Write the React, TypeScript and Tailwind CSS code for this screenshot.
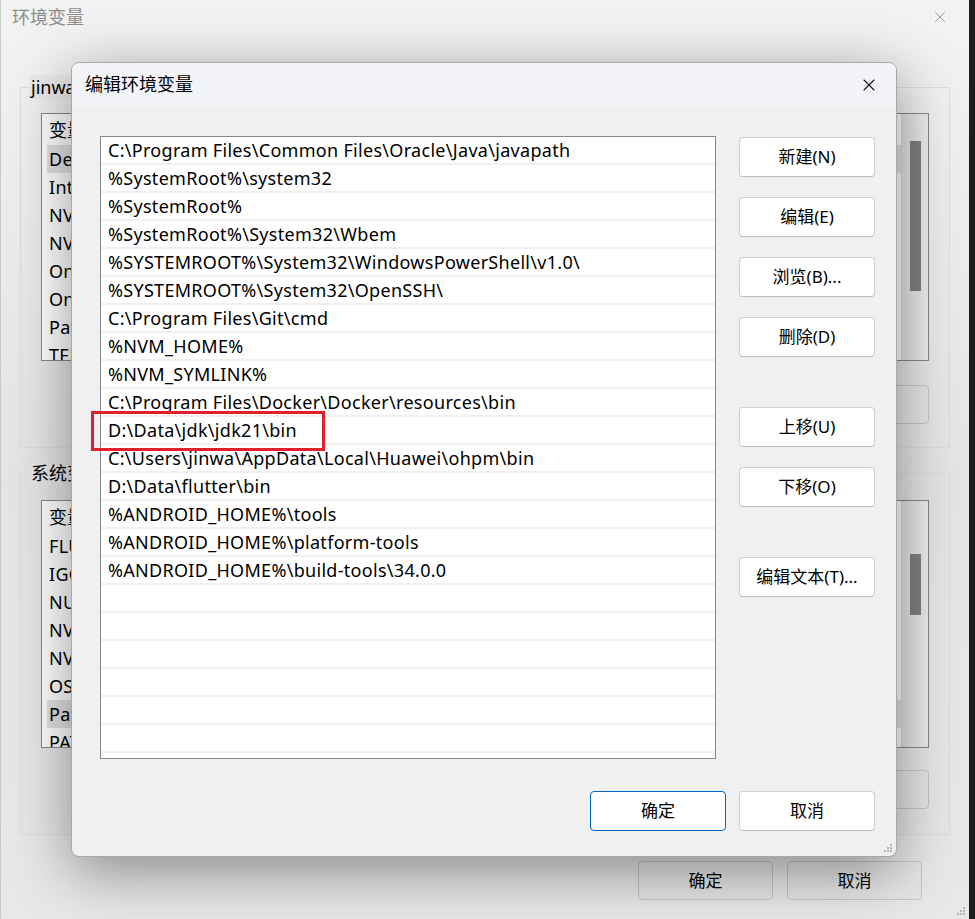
import { X } from 'lucide-react';

const FONT = '"Noto Sans", "Noto Sans CJK SC", sans-serif';

const paths = [
  'C:\\Program Files\\Common Files\\Oracle\\Java\\javapath',
  '%SystemRoot%\\system32',
  '%SystemRoot%',
  '%SystemRoot%\\System32\\Wbem',
  '%SYSTEMROOT%\\System32\\WindowsPowerShell\\v1.0\\',
  '%SYSTEMROOT%\\System32\\OpenSSH\\',
  'C:\\Program Files\\Git\\cmd',
  '%NVM_HOME%',
  '%NVM_SYMLINK%',
  'C:\\Program Files\\Docker\\Docker\\resources\\bin',
  'D:\\Data\\jdk\\jdk21\\bin',
  'C:\\Users\\jinwa\\AppData\\Local\\Huawei\\ohpm\\bin',
  'D:\\Data\\flutter\\bin',
  '%ANDROID_HOME%\\tools',
  '%ANDROID_HOME%\\platform-tools',
  '%ANDROID_HOME%\\build-tools\\34.0.0',
];

const userVars = ['Desktop', 'IntelliJ IDEA', 'NVM_HOME', 'NVM_SYMLINK', 'OneDrive', 'OneDriveConsumer', 'Path', 'TEMP'];
const sysVars = ['FLUTTER_STORAGE_BASE_URL', 'IGCCSVC_DB', 'NUMBER_OF_PROCESSORS', 'NVM_HOME', 'NVM_SYMLINK', 'OS', 'Path', 'PATHEXT'];

function Grip() {
  return (
    <svg width="10" height="10" viewBox="0 0 10 10" className="absolute right-[3px] bottom-[3px]">
      <rect x="7" y="1" width="2" height="2" fill="#b4b4b4" />
      <rect x="4" y="4" width="2" height="2" fill="#b4b4b4" />
      <rect x="7" y="4" width="2" height="2" fill="#b4b4b4" />
      <rect x="1" y="7" width="2" height="2" fill="#b4b4b4" />
      <rect x="4" y="7" width="2" height="2" fill="#b4b4b4" />
      <rect x="7" y="7" width="2" height="2" fill="#b4b4b4" />
    </svg>
  );
}

function VarList({ items, selected, thumbTop, thumbH }: { items: string[]; selected: number; thumbTop: number; thumbH: number }) {
  return (
    <div className="flex h-[248px] border border-[#828790] bg-white overflow-hidden">
      <div className="flex-1 flex flex-col overflow-hidden">
        <div className="h-[31px] shrink-0 flex items-center pl-[7px] pt-[2px] text-[18px] text-black">
          <span className="w-[300px]">变量</span>
          <span>值</span>
        </div>
        {items.map((v, i) => (
          <div
            key={v}
            className={`h-[28px] shrink-0 flex items-center pl-[2px] ml-[5px] text-[18px] tracking-[0.3px] text-black whitespace-nowrap ${i === selected ? 'bg-[#e3e3e3]' : ''}`}
          >
            {v}
          </div>
        ))}
      </div>
      <div className="w-[27px] shrink-0 bg-gradient-to-r from-[#e2e2e2] to-[#ececec] border-l border-[#d8d8d8] relative">
        <div className="absolute left-[8px] w-[11px] bg-[#808080]" style={{ top: thumbTop, height: thumbH }} />
      </div>
    </div>
  );
}

function BgButton({ label, w = 136 }: { label: string; w?: number }) {
  return (
    <div
      className="h-[39px] shrink-0 border border-[#c4c4c4] rounded-[4px] bg-[#e6e6e6] flex items-center justify-center text-[17px] text-black"
      style={{ width: w }}
    >
      {label}
    </div>
  );
}

function DlgButton({ label, primary }: { label: string; primary?: boolean }) {
  return (
    <div
      className={`w-[136px] h-[40px] shrink-0 rounded-[4px] bg-white flex items-center justify-center text-[17px] text-black border ${primary ? 'border-[#0067c0]' : 'border-[#cfcfcf] border-b-[#bdbdbd]'}`}
    >
      {label}
    </div>
  );
}

export default function App() {
  const rows = [...paths, ...Array(7).fill('')];
  return (
    <div className="relative w-[975px] h-[919px] flex overflow-hidden" style={{ fontFamily: FONT }}>
      {/* Background window: 环境变量 */}
      <div className="relative w-[969px] h-full bg-[#eeeeee] border-l border-[#c8c8c8] flex flex-col">
        <div className="h-[34px] shrink-0 flex items-center justify-between pl-[11px] pr-[20px] bg-[#f2f2f2]">
          <span className="text-[18px] text-[#8c8c8c]">环境变量</span>
          <X size={18} strokeWidth={1.2} color="#8c8c8c" />
        </div>
        <div className="flex-1 bg-gradient-to-b from-[#f2f2f2] via-[#e4e4e4] to-[#e8e8e8] px-[19px] pt-[53px] flex flex-col">
          {/* user vars */}
          <div className="relative border border-[#dcdcdc] h-[361px] px-[20px] pt-[25px]">
            <span className="absolute left-[9px] -top-[13px] px-[1px] bg-[#e9e9e9] text-[18px] text-black leading-[24px]">jinwang 的用户变量(U)</span>
            <VarList items={userVars} selected={0} thumbTop={27} thumbH={150} />
            <div className="flex justify-end gap-[13px] mt-[24px]">
              <BgButton label="新建(N)..." />
              <BgButton label="编辑(E)..." />
              <BgButton label="删除(D)" />
            </div>
          </div>
          {/* system vars */}
          <div className="relative border border-[#dcdcdc] h-[362px] mt-[25px] px-[20px] pt-[26px]">
            <span className="absolute left-[9px] -top-[13px] px-[1px] bg-[#e6e6e6] text-[18px] text-black leading-[24px]">系统变量(S)</span>
            <VarList items={sysVars} selected={6} thumbTop={53} thumbH={61} />
            <div className="flex justify-end gap-[13px] mt-[22px]">
              <BgButton label="新建(W)..." />
              <BgButton label="编辑(I)..." />
              <BgButton label="删除(L)" />
            </div>
          </div>
          <div className="flex justify-end gap-[14px] mt-[26px] pr-[28px]">
            <BgButton label="确定" w={135} />
            <BgButton label="取消" w={135} />
          </div>
        </div>
        <Grip />
      </div>
      <div className="flex-1 bg-[#1c1c1c]" />

      {/* Foreground dialog: 编辑环境变量 */}
      <div className="absolute left-[71px] top-[62px] w-[826px] h-[795px] rounded-[8px] bg-[#f0f0f0] border border-[#a8a8a8] shadow-[0_14px_60px_rgba(0,0,0,0.42)] overflow-hidden flex flex-col">
        <div className="h-[43px] shrink-0 bg-[#f3f4f8] flex items-center justify-between pl-[13px] pr-[17px]">
          <span className="text-[18px] text-black">编辑环境变量</span>
          <X size={20} strokeWidth={1.3} color="#111" />
        </div>
        <div className="flex-1 flex px-[28px] pt-[30px] gap-[23px]">
          <div className="w-[616px] h-[623px] shrink-0 border border-[#828790] bg-white overflow-hidden">
            {rows.map((p, i) => (
              <div key={i} className="h-[28px] border-b-2 border-[#f0f0f0] flex items-center pl-[7px] pt-[1px] text-[18px] tracking-[0.3px] text-black whitespace-nowrap">
                {p}
              </div>
            ))}
          </div>
          <div className="flex flex-col pt-[1px]">
            <DlgButton label="新建(N)" />
            <div className="h-[20px]" />
            <DlgButton label="编辑(E)" />
            <div className="h-[20px]" />
            <DlgButton label="浏览(B)..." />
            <div className="h-[20px]" />
            <DlgButton label="删除(D)" />
            <div className="h-[50px]" />
            <DlgButton label="上移(U)" />
            <div className="h-[20px]" />
            <DlgButton label="下移(O)" />
            <div className="h-[50px]" />
            <DlgButton label="编辑文本(T)..." />
          </div>
        </div>
        <div className="flex justify-end gap-[13px] pr-[21px] pb-[25px]">
          <DlgButton label="确定" primary />
          <DlgButton label="取消" />
        </div>
        <Grip />
      </div>

      {/* red highlight box */}
      <div className="absolute left-[91px] top-[411px] w-[234px] h-[40px] border-[3px] border-[#e0202a]" />
    </div>
  );
}
